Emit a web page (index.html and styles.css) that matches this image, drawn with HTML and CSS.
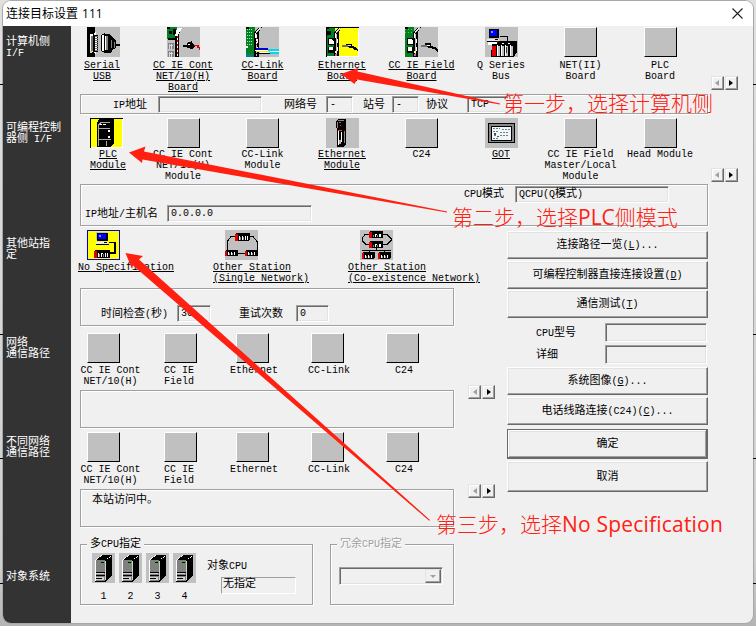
FILE: index.html
```html
<!DOCTYPE html>
<html lang="zh-CN">
<head>
  <meta charset="UTF-8">
  <title>连接目标设置 111</title>
  <link rel="stylesheet" href="styles.css">
</head>
<body>
  <!-- shared icons -->
  <svg class="defs" width="0" height="0">
    <symbol id="pc" viewBox="0 0 14 14">
      <path fill="#c0c0c0" d="M1 0h11v9H1z"/><path fill="#000" d="M2 1h10v8H2zM12 1h1v9H2V9h10z"/><path fill="#00f" d="M3 2h8v6H3z"/><path fill="#5af" d="M4 3h2v2H4z"/><path fill="#e8e8e8" d="M5 10h4v1H0v3h13v-3H9z"/><path fill="#000" d="M0 13h14v1H0zM9 11h3v1H9z"/>
    </symbol>
    <symbol id="rack" viewBox="0 0 16 8">
      <path fill="#000" d="M1 0h15v7l-1 1H1z"/><path fill="#e00000" d="M0 1h3v7H0z"/><path fill="#fff" d="M4 3h1v4H4zM7 3h1v4H7zM8 3h1v1H8zM11 3h1v4h-1zM13 3h1v4h-1z"/><path fill="#808080" d="M5 4h1v3H5zM9 4h1v3H9z"/>
    </symbol>
    <symbol id="cpu" viewBox="0 0 23 30">
      <path fill="#c0c0c0" d="M0 0h23v30H0z"/><path fill="#000" d="M12 2h8v21l-7 6H3v-1h9V7z"/><path fill="#fff" d="M3 7l7-5h2L5 7z"/><path fill="#000" d="M5 6l6-4h8l-7 5H4z"/><path fill="#fff" d="M3 7h1v21H3zM18 3h1v1h-1zM17 4h1v1h-1zM15 5h1v1h-1z"/><path fill="#808080" d="M4 7h9v21H4z"/><path fill="#d0d0d0" d="M4 20h8v1H4zM4 24h8v3H4zM13 8h1v19h-1z"/><path fill="#000" d="M4 19h9v1H4zM4 22h9v1H4zM4 25h6v1H4zM9 9h3v1H9z"/><path fill="#00e000" d="M9 10h2v1H9z"/>
    </symbol>
    <symbol id="board" viewBox="0 0 16 30">
      <path fill="#008020" d="M0 0h9v30H0z"/><path fill="#000" d="M8 6h1v24H8zM0 0h3v2H0zM9 4l4-3 3-1-3 5v25H8V7z"/><path fill="#c0c0c0" d="M10 7h1v22h-1zM9 5l5-4h1l-4 5z"/><path fill="#fff" d="M9 6h1v5H9zM11 12h1v4h-1zM11 20h1v4h-1zM10 4l4-3v1l-4 3z"/>
    </symbol>
  </svg>

  <div class="window">
    <div class="titlebar">
      <span class="title">连接目标设置 111</span>
      <svg class="close" width="11" height="11" viewBox="0 0 11 11"><path d="M.5.5l10 10M10.500.5l-10 10"/></svg>
    </div>

    <div class="content">
      <div class="sidebar">
        <div class="side-pc">计算机侧<br><i>I/F</i></div>
        <div class="side-plc">可编程控制<br>器侧<i> I/F</i></div>
        <div class="side-other">其他站指<br>定</div>
        <div class="side-net">网络<br>通信路径</div>
        <div class="side-diff">不同网络<br>通信路径</div>
        <div>对象系统</div>
      </div>

      <div class="main">
        <div class="row pc-row">
          <div class="item link serial">
            <svg width="33" height="30"><path fill="#000" d="M0 0h8v30H0z"/><path fill="#fff" d="M3 7h3l3-2v22l-3-2H3z"/><path fill="#777" d="M4 9h2v15H4z"/><path fill="#000" d="M6 7h1v18H6z"/><path fill="#dcd44c" d="M3 24h2v2H3z"/><path fill="#fff" stroke="#000" d="M7.500 8.500h3v16h-3z"/><path stroke="#777" stroke-dasharray="1 1" stroke-width="3" d="M9.500 9v15"/><path fill="#fff" stroke="#000" d="M14.500 8.500l3-2v19l-3-2z"/><path fill="#000" d="M17 7h6l3 4 3 3v7l-3 1-2 4h-7zM29 17h4v2h-4z"/><path fill="#808080" d="M19 9h2v14h-2zM24 13h1v8h-1zM27 15h1v6h-1z"/><path fill="#fff" d="M18 9h1v14h-1z"/></svg>
            <span>Serial<br>USB</span>
          </div>
          <div class="item link">
            <svg width="33" height="30"><path fill="#008020" d="M0 0h10v12H0z"/><path fill="#000" d="M0 0h3v2H0zM2 4h3v3H2zM6 2h3v6H6zM1 11h7v2H1zM8 5h2v25H8zM10 2h3v3l-1 2v23h-3z"/><path fill="#fff" d="M10 1h5l-4 7v21h-1V9H8z"/><path stroke="#e00000" stroke-dasharray="2 2" d="M10.500 9v20"/><path fill="#808080" d="M1 16h6v6H1zM1 24h6v6H1z"/><path stroke="#ddd" fill="none" d="M2.500 17v5M2 18.500h4M4.500 17v5M2.500 25v5M2 26.500h4M4.500 25v5"/><path fill="#000" d="M16 18h4v-2l5-2v2l3 2v2l-3 2-5-1v-1h-4z"/><path fill="#fff" d="M21 17h2v1h-2z"/><path fill="none" stroke="#e00000" stroke-width="1.500" d="M27 18.500h4v2h2V23"/></svg>
            <span>CC IE Cont<br>NET/10(H)<br>Board</span>
          </div>
          <div class="item link">
            <svg width="33" height="30"><use href="#board" width="16" height="30"/><path stroke="#b8e0b8" stroke-dasharray="1 2" d="M1.500 2v16M3.500 2v16M5.500 2v16"/><path fill="#fff" d="M0 19h2v2H0zM10 8h1v10h-1z"/><path stroke="#e00000" stroke-dasharray="1 2" d="M10.500 11v9"/><path fill="#0000d0" d="M10 21h12v2H10z"/><path fill="#ee0" d="M10 24h12v1H10z"/><path fill="#00d8f0" d="M22 22h11v2H22zM24 25h9v2h-9z"/><path fill="#fff" d="M9 23h13v1H9zM14 25h9v2h-9zM24 24h9v1h-9z"/><path fill="#000" d="M10 26h14v1H10z"/><path fill="#008080" d="M0 27h7v3H0z"/></svg>
            <span>CC-Link<br>Board</span>
          </div>
          <div class="item link selected">
            <svg width="33" height="30"><use href="#board" width="16" height="30"/><path fill="#000" d="M1 4h4v4H1zM0 0h33v1H0zM0 0h1v30H0zM2 11h7v7H2zM2 20h7v6H2z"/><path fill="#fff" d="M3 12h2l3 3v2H3zM3 20h4v3H3zM32 1h1v29H1v-1h31z"/><path fill="#e050e0" d="M9 27h2v2H9z"/><path fill="#ff8" d="M9 24h2v2H9z"/><path fill="#000" d="M20 17h6v2l3 1 3 2v2l-3-1-3-2-6-1z"/><path fill="#707070" d="M16 18h6v2h-6z"/><path fill="#ddd" d="M22 18h3v1h-3z"/></svg>
            <span>Ethernet<br>Board</span>
          </div>
          <div class="item link">
            <svg width="33" height="30"><use href="#board" width="16" height="30"/><path stroke="#60c060" stroke-dasharray="1 2" d="M0 2.500h8M0 5.500h8"/><path fill="#000" d="M2 11h6v7H2zM2 20h6v6H2z"/><path fill="#fff" d="M3 12h3l2 2v3H3zM3 20h4v4H3z"/><path fill="#e050e0" d="M9 27h2v2H9z"/><path fill="#ff8" d="M9 24h2v2H9z"/><path fill="#000" d="M20 16h6v3l4 1 3 3v2l-4-3-4-1-5-1z"/><path fill="#707070" d="M16 18h6v2h-6z"/><path fill="#fff" d="M22 18h3v1h-3z"/></svg>
            <span>CC IE Field<br>Board</span>
          </div>
          <div class="item">
            <svg width="33" height="30"><use href="#pc" x="2" y="1" width="13" height="14"/><path fill="none" stroke="#000" d="M15 9.500h7.500V15"/><path fill="#fff" d="M3 15h12v3H3z"/><path fill="#700" d="M12 14h5v4h-5z"/><path fill="#000" d="M7 17h4l3-3h18v11l-3 5H6z"/><path fill="#e00000" d="M7 19h4v10H7z"/><path fill="#c0c0c0" d="M12 19h3v10h-3zM16 19h3v10h-3zM20 19h3v10h-3zM25 19h3v10h-3z"/><path fill="#fff" d="M12 18h1v11h-1zM16 18h1v11h-1zM20 18h1v11h-1zM25 18h1v11h-1zM17 16h2v1h-2zM23 16h2v1h-2z"/><path fill="#333" d="M21 20h1v6h-1z"/></svg>
            <span>Q Series<br>Bus</span>
          </div>
          <div class="item"><b class="blank"></b><span>NET(II)<br>Board</span></div>
          <div class="item"><b class="blank"></b><span>PLC<br>Board</span></div>
          <div class="scroller"><button class="left" disabled></button><button class="right"></button></div>
        </div>

        <div class="box pc-box">
          <label class="ip"><i>IP</i>地址</label><div class="field f-ip"></div>
          <label class="netno">网络号</label><div class="field f-net">-</div>
          <label class="station">站号</label><div class="field f-sta">-</div>
          <label class="proto">协议</label><div class="field f-proto">TCP</div>
        </div>

        <div class="row plc-row">
          <div class="item link plc">
            <svg class="yellow" width="33" height="30"><path fill="#000" d="M0 0h33v1H0zM0 0h1v30H0zM8 2l2-1h14v24l-3 4H7V6z"/><path fill="#fff" d="M32 1h1v29H1v-1h31z"/><path fill="none" stroke="#aaa" d="M8.500 28V7l3-3h8M9 10.500h11M9 21.500h12M16.500 23v5"/><path fill="#fff" d="M10 6h2v1h-2zM13 6h3v1h-3zM18 12h2v2h-2zM18 18h2v2h-2z"/></svg>
            <span>PLC<br>Module</span>
          </div>
          <div class="item"><b class="blank"></b><span>CC IE Cont<br>NET/10(H)<br>Module</span></div>
          <div class="item"><b class="blank"></b><span>CC-Link<br>Module</span></div>
          <div class="item link">
            <svg width="33" height="30"><path fill="#000" d="M12 1h8v25l-3 3h-6V11l-1-1V4z"/><path fill="#888" d="M12 2h6v1h-6zM11 4h1v6h-1zM18 13h1v12h-1z"/><path fill="#fff" d="M12 13h1v14h-1zM15 14h1v10h-1z"/><path fill="#f33" d="M13 4h2v1h-2zM14 7h1v1h-1zM12 12h4v1h-4z"/><path fill="#aaa" d="M13 22h2v4h-2z"/></svg>
            <span>Ethernet<br>Module</span>
          </div>
          <div class="item"><b class="blank"></b><span>C24</span></div>
          <div class="item link">
            <svg width="33" height="30"><path fill="#888" stroke="#000" d="M3.500 5.500h26v19h-26z"/><path fill="#f2f6f8" stroke="#000" d="M6.500 8.500h20v14h-20z"/><path stroke="#6b8292" fill="none" stroke-dasharray="2 1" d="M8 10.500h7M17 11.500h8M8 13.500h5M15 14.500h9M9 17.500h3M15 17.500h9M8 20.500h6"/><path fill="#456" d="M9 15h2v2H9zM12 18h2v1h-2z"/></svg>
            <span>GOT</span>
          </div>
          <div class="item"><b class="blank"></b><span>CC IE Field<br>Master/Local<br>Module</span></div>
          <div class="item"><b class="blank"></b><span>Head Module</span></div>
          <div class="scroller"><button class="left" disabled></button><button class="right"></button></div>
        </div>

        <div class="box plc-box">
          <div class="line mode"><label><i>CPU</i>模式</label><div class="field f-mode">QCPU(Q<em>模式</em>)</div></div>
          <div class="line host"><label><i>IP</i>地址<i>/</i>主机名</label><div class="field f-host">0.0.0.0</div></div>
        </div>

        <div class="lower">
          <div class="left-col">
            <div class="row other-row">
              <div class="item link">
                <svg class="yellow" width="33" height="30"><path fill="none" stroke="#0000d8" stroke-width="1" d="M.5.5h32v29H.5z"/><use href="#pc" x="8" y="2" width="14" height="13"/><path fill="none" stroke="#000" stroke-width="1.500" d="M22 12.500h6V23h-5"/><use href="#rack" x="7" y="20" width="16" height="8"/></svg>
                <span>No Specification</span>
              </div>
              <div class="item link">
                <svg width="33" height="30"><path fill="none" stroke="#000" d="M10 6.500H6L2.500 11v9M25 6.500h3l4 5v9M12 23.500h9"/><use href="#rack" x="10" y="3" width="15" height="8"/><use href="#rack" x="0" y="19" width="13" height="8"/><use href="#rack" x="20" y="19" width="13" height="8"/></svg>
                <span>Other Station<br>(Single Network)</span>
              </div>
              <div class="item link">
                <svg width="33" height="30"><path fill="none" stroke="#000" d="M9 4.500H5L2.500 8v3l3 3H9M23 4.500h4l4 4v2l-4 4h-4M16.500 18v2M2 20.500h29M9.500 20v3M24.500 20v3"/><use href="#rack" x="9" y="1" width="14" height="7"/><use href="#rack" x="9" y="11" width="14" height="7"/><use href="#rack" x="2" y="22" width="13" height="7"/><use href="#rack" x="18" y="22" width="13" height="7"/></svg>
                <span>Other Station<br>(Co-existence Network)</span>
              </div>
            </div>

            <div class="box time-box">
              <label class="time">时间检查<i>(</i>秒<i>)</i></label><div class="field f-time">30</div>
              <label class="retry">重试次数</label><div class="field f-retry">0</div>
            </div>

            <div class="network">
              <div>
                <div class="row net-row">
                  <div class="item n1"><b class="blank"></b><span>CC IE Cont<br>NET/10(H)</span></div>
                  <div class="item n2"><b class="blank"></b><span>CC IE<br>Field</span></div>
                  <div class="item n3"><b class="blank"></b><span>Ethernet</span></div>
                  <div class="item n4"><b class="blank"></b><span>CC-Link</span></div>
                  <div class="item n5"><b class="blank"></b><span>C24</span></div>
                </div>
                <div class="box"></div>
              </div>
              <div class="scroller"><button class="left" disabled></button><button class="right"></button></div>
            </div>

            <div class="network">
              <div>
                <div class="row net-row">
                  <div class="item n1"><b class="blank"></b><span>CC IE Cont<br>NET/10(H)</span></div>
                  <div class="item n2"><b class="blank"></b><span>CC IE<br>Field</span></div>
                  <div class="item n3"><b class="blank"></b><span>Ethernet</span></div>
                  <div class="item n4"><b class="blank"></b><span>CC-Link</span></div>
                  <div class="item n5"><b class="blank"></b><span>C24</span></div>
                </div>
                <div class="box access">本站访问中。</div>
              </div>
              <div class="scroller"><button class="left" disabled></button><button class="right"></button></div>
            </div>

            <div class="systems">
              <div class="group multi">
                <span class="legend">多<i>CPU</i>指定</span>
                <div class="multi-body">
                  <div class="cpus">
                    <div><svg width="23" height="30"><use href="#cpu"/></svg>1</div>
                    <div><svg width="23" height="30"><use href="#cpu"/></svg>2</div>
                    <div><svg width="23" height="30"><use href="#cpu"/></svg>3</div>
                    <div><svg width="23" height="30"><use href="#cpu"/></svg>4</div>
                  </div>
                  <div class="target">
                    <label>对象<i>CPU</i></label>
                    <div class="thin">无指定</div>
                  </div>
                </div>
              </div>
              <div class="group redundant">
                <span class="legend">冗余<i>CPU</i>指定</span>
                <div class="field combo"><span class="drop"></span></div>
              </div>
            </div>
          </div>

          <div class="right-col">
            <button class="btn">连接路径一览<i>(<u>L</u>)...</i></button>
            <button class="btn">可编程控制器直接连接设置<i>(<u>D</u>)</i></button>
            <button class="btn b3">通信测试<i>(<u>T</u>)</i></button>
            <div class="line type"><label><i>CPU</i>型号</label><div class="field"></div></div>
            <div class="line detail"><label>详细</label><div class="field"></div></div>
            <button class="btn">系统图像<i>(<u>G</u>)...</i></button>
            <button class="btn">电话线路连接<i>(C24)(<u>C</u>)...</i></button>
            <button class="btn ok">确定</button>
            <button class="btn cancel">取消</button>
          </div>
        </div>
      </div>
    </div>
  </div>

  <!-- ends of the tree lines behind the window -->
  <svg class="ticks" width="756" height="626"><path d="M0 84.500h3M753 84.500h3M0 334.500h3M753 334.500h3M0 458.500h3M753 458.500h3M0 583.500h3M753 583.500h3"/></svg>

  <!-- step annotations -->
  <svg class="arrows" width="756" height="626">
    <path d="M341 74l17-6-.5 3.500L500 103.500v1L357 79.500l-2.500 4.500z"/>
    <path d="M129 152.500l16.500-6-1.500 5L447 211.500v1L142.500 159.500l-.5 3.500z"/>
    <path d="M125.500 253l17.500 3-4 3.500L430 520l-.8.800L133 265.500l-1 3.500z"/>
  </svg>
  <div class="note note1">第一步，选择计算机侧</div>
  <div class="note note2">第二步，选择<span>PLC</span>侧模式</div>
  <div class="note note3">第三步，选择<span class="spec">No Specification</span></div>
</body>
</html>
```

FILE: styles.css
```css
* {
  box-sizing: border-box;
}

body {
  margin: 0;
  width: 756px;
  height: 626px;
  padding: 1px 3px 3px;
  overflow: hidden;
  background: linear-gradient(to bottom, #e0e0e0, #cfcfcf 90%, #b4b4b4);
  font: 11px/11px "Liberation Mono", "Noto Sans CJK SC", monospace;
  color: #000;
}

i, em {
  font-style: normal;
}

/* latin text is one size down so that it stays half width */
i {
  font-size: 10px;
  white-space: pre;
}

em {
  font-size: 11px;
}

.defs {
  position: absolute;
}

.window {
  height: 622px;
  border-radius: 8px;
  overflow: hidden;
  background: #f0f0f0;
  box-shadow: 0 0 0 1px #a8a8a8;
}

.titlebar {
  display: flex;
  justify-content: space-between;
  align-items: center;
  height: 25px;
  padding: 0 10px 0 3px;
  background: #fff;
}

.title {
  font: 12px/24px "Open Sans", "Noto Sans CJK SC", sans-serif;
  word-spacing: 1px;
}

.close {
  fill: none;
  stroke: #222;
  stroke-width: 1.1;
}

.content {
  display: flex;
  height: 597px;
}

.sidebar {
  width: 68px;
  flex: none;
  padding: 11px 0 0 3px;
  background: #333;
  color: #fff;
  white-space: nowrap;
}

.side-pc { height: 86px; }
.side-plc { height: 116px; }
.side-other { height: 99px; }
.side-net { height: 99px; }
.side-diff { height: 135px; }

.main {
  flex: 1;
  min-width: 0;
}

/* icon rows */
.row {
  display: flex;
}

.item {
  display: flex;
  flex-direction: column;
  align-items: center;
  flex: none;
  width: 33px;
  font-size: 10px;
  text-align: center;
  white-space: nowrap;
}

.item svg,
.cpus svg {
  display: block;
  flex: none;
  background: #c0c0c0;
  shape-rendering: crispEdges;
}

.item.selected svg,
.item svg.yellow {
  background: #ff0;
}

.link span {
  text-decoration: underline;
  text-underline-offset: 1px;
}

.blank {
  width: 33px;
  height: 30px;
  flex: none;
  background: #c0c0c0;
  border: 1px solid #000;
  border-top-color: #fff;
  border-left-color: #fff;
}

.pc-row {
  height: 67px;
  margin-top: 1px;
  margin-left: 16px;
  gap: 46.5px;
}

.pc-row .item span {
  margin-top: 3px;
}

.pc-row .serial span {
  margin-left: -3px;
}

.plc-row {
  height: 66px;
  margin-top: 4px;
  margin-left: 16px;
  gap: 46.5px;
}

.plc-row .item span {
  margin-top: 1px;
}

.plc-row .plc {
  margin-left: 3px;
  margin-right: -3px;
}

.plc-row .plc span {
  margin-left: 3px;
}

.scroller {
  display: flex;
  gap: 1px;
  height: 14px;
  flex: none;
}

.pc-row .scroller {
  align-self: flex-end;
  margin: 0 0 4px -12.5px;
}

.plc-row .scroller {
  align-self: flex-end;
  margin: 0 0 2px -12.5px;
}

.scroller button {
  display: flex;
  align-items: center;
  justify-content: center;
  width: 13px;
  height: 14px;
  padding: 0;
  background: #f0f0f0;
  border: 1px solid #696969;
  border-top-color: #e3e3e3;
  border-left-color: #e3e3e3;
  box-shadow: inset -1px -1px #a0a0a0, inset 1px 1px #fff;
}

.scroller button::before {
  content: "";
  border: 3px solid transparent;
  border-width: 3px 0 3px 4px;
  border-left-color: #000;
}

.scroller .left::before {
  border-width: 3px 4px 3px 0;
  border-right-color: #a0a0a0;
}

/* etched boxes and sunken fields */
.box,
.group {
  border: 1px solid #a0a0a0;
  box-shadow: 1px 1px #fff, inset 1px 1px #fff;
}

.box {
  width: 374px;
  height: 38px;
  margin-left: 9px;
}

.field {
  flex: none;
  height: 17px;
  padding: 2px 2px 0 3px;
  border: 1px solid #fff;
  border-top-color: #a0a0a0;
  border-left-color: #a0a0a0;
  box-shadow: inset 1px 1px #696969, inset -1px -1px #e3e3e3;
  font-size: 10px;
  white-space: nowrap;
}

label {
  white-space: nowrap;
  flex: none;
  padding-top: 2px;
}

.line {
  display: flex;
  align-items: center;
}

.pc-box {
  display: flex;
  align-items: center;
  width: 628px;
  height: 20px;
}

.ip { width: 45px; margin-left: 32px; }
.f-ip { width: 104px; }
.netno { width: 42px; margin-left: 22px; }
.f-net { width: 27px; }
.station { width: 29px; margin-left: 10px; }
.f-sta { width: 27px; }
.proto { width: 41px; margin-left: 7px; }
.f-proto { width: 42px; }

.plc-box {
  width: 628px;
  height: 42px;
}

.mode {
  margin: 1px 0 0 383px;
}

.mode label {
  width: 51px;
  padding-top: 0;
}

.f-mode {
  width: 154px;
}

.host {
  margin: 2px 0 0 4px;
}

.host label {
  width: 82px;
}

.f-host {
  width: 145px;
}

.lower {
  display: flex;
}

.left-col {
  width: 436px;
  flex: none;
}

.other-row {
  height: 58px;
  margin: 4px 0 0 16px;
  gap: 102px;
}

.other-row .item {
  align-items: flex-start;
  text-align: left;
}

.other-row .item span {
  margin-top: 2px;
  margin-left: -9px;
}

.other-row .item + .item span {
  margin-left: -12px;
}

.other-row .item:nth-child(2) {
  margin-left: 3px;
}

.time-box {
  display: flex;
  align-items: center;
  padding-top: 12px;
}

.time { width: 76px; margin-left: 20px; }
.f-time { width: 34px; }
.retry { width: 57px; margin-left: 28px; }
.f-retry { width: 33px; }

.network {
  display: flex;
  height: 99px;
}

.time-box + .network {
  margin-top: 7px;
}

.network .scroller {
  margin: 52px 0 0 14px;
}

.net-row {
  height: 57px;
  margin-left: 16px;
}

.net-row .item span {
  margin-top: 2px;
}

.n1 span { margin-left: 14px; }
.n2 { margin-left: 44px; }
.net-row .n2 span { margin-left: -3px; text-align: left; }
.n3 { margin-left: 39px; }
.n3 span { margin-left: 3px; }
.n4 { margin-left: 42px; }
.n4 span { margin-left: 3px; }
.n5 { margin-left: 42px; }
.n5 span { margin-left: 3px; }

.access {
  padding: 5px 0 0 11px;
}

.systems {
  display: flex;
  gap: 17px;
  margin: 13px 0 0 9px;
}

.group {
  height: 61px;
}

.legend {
  display: block;
  width: max-content;
  height: 12px;
  margin: -7px 0 0 6px;
  padding: 1px 3px 0;
  background: #f0f0f0;
  white-space: nowrap;
}

.multi {
  width: 233px;
}

.multi-body {
  display: flex;
  margin: 3px 0 0 11px;
}

.cpus {
  display: flex;
  gap: 4px;
  font-size: 10px;
  text-align: center;
}

.cpus div {
  padding-left: 1px;
  margin-left: -1px;
}

.cpus svg {
  margin-bottom: 8px;
}

.target {
  margin: 8px 0 0 11px;
}

.thin {
  width: 75px;
  height: 17px;
  margin: 5px 0 0 14px;
  padding: 1px 0 0 1px;
  border: 1px solid #fff;
  border-top-color: #a0a0a0;
  border-left-color: #a0a0a0;
}

.redundant {
  width: 124px;
  color: #a0a0a0;
  text-shadow: 1px 1px #fff;
}

.combo {
  display: flex;
  justify-content: flex-end;
  width: 104px;
  height: 18px;
  margin: 17px 0 0 8px;
  padding: 1px;
}

.drop {
  display: flex;
  align-items: center;
  justify-content: center;
  width: 16px;
  height: 14px;
  border: 1px solid #696969;
  border-top-color: #e3e3e3;
  border-left-color: #e3e3e3;
  background: #f0f0f0;
  box-shadow: inset -1px -1px #a0a0a0;
}

.drop::before {
  content: "";
  border: 3px solid transparent;
  border-top-color: #a0a0a0;
  border-bottom-width: 0;
}

/* buttons on the right */
.right-col {
  display: flex;
  flex-direction: column;
  width: 201px;
  margin-top: 5px;
}

.btn {
  height: 28px;
  margin: 0 0 2px;
  padding: 1px 0 0;
  flex: none;
  border: 1px solid #696969;
  border-top-color: #fff;
  border-left-color: #fff;
  background: #f0f0f0;
  box-shadow: inset -1px -1px #a0a0a0, inset 1px 1px #e3e3e3;
  font: inherit;
  color: #000;
}

.b3 {
  margin: -1px 0 5px;
}

.right-col .field {
  width: 102px;
  height: 19px;
}

.type,
.detail {
  height: 19px;
  padding-left: 29px;
}

.type {
  margin-bottom: 3px;
}

.detail {
  margin-bottom: 3px;
}

.right-col label {
  width: 69px;
}

.ok {
  height: 30px;
  margin: 2px 0;
  border-color: #696969;
  box-shadow: inset -1px -1px #696969, inset 1px 1px #fff, inset -2px -2px #a0a0a0, inset 2px 2px #e3e3e3;
}

.cancel {
  height: 31px;
}

/* overlay */
.ticks,
.arrows {
  position: absolute;
  left: 0;
  top: 0;
}

.ticks {
  stroke: #000;
}

.arrows {
  fill: #ff2011;
}

.note {
  position: absolute;
  font: 300 21px/24px "Noto Sans CJK SC", sans-serif;
  color: #ff2011;
  white-space: nowrap;
}

.note span {
  font-family: "Open Sans", sans-serif;
  font-weight: 400;
}

.note .spec {
  letter-spacing: 0.2px;
}

.note1 {
  left: 503px;
  top: 90px;
}

.note2 {
  left: 452px;
  top: 204px;
}

.note3 {
  left: 436px;
  top: 511px;
}
```
